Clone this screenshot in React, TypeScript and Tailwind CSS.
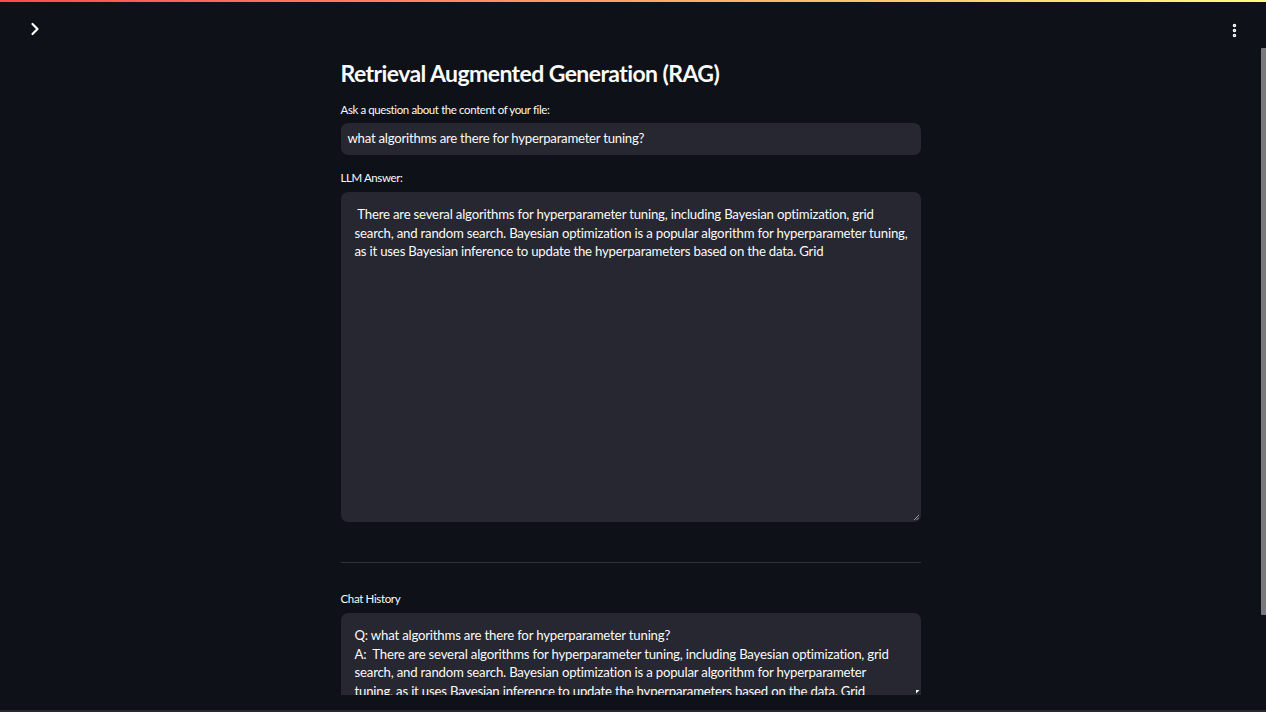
import { ChevronRight, EllipsisVertical } from 'lucide-react';

const answerLines = [
    '\u00a0There are several algorithms for hyperparameter tuning, including Bayesian optimization, grid',
    'search, and random search. Bayesian optimization is a popular algorithm for hyperparameter tuning,',
    'as it uses Bayesian inference to update the hyperparameters based on the data. Grid',
];

const historyLines = [
    'Q: what algorithms are there for hyperparameter tuning?',
    'A:\u00a0\u00a0There are several algorithms for hyperparameter tuning, including Bayesian optimization, grid',
    'search, and random search. Bayesian optimization is a popular algorithm for hyperparameter',
    'tuning, as it uses Bayesian inference to update the hyperparameters based on the data. Grid',
];

function ResizeGrip() {
    return (
        <svg width="6" height="6" viewBox="0 0 6 6" className="absolute right-[2px] bottom-[2px]">
            <path d="M1 6 L6 1 M3.5 6 L6 3.5" stroke="#9a9aa0" strokeWidth="1" />
        </svg>
    );
}

export default function App() {
    return (
        <div className="h-[712px] w-full overflow-hidden bg-[#0e1117] flex flex-col text-[#fafafa] font-['Lato',sans-serif]">
            {/* decoration bar */}
            <div className="h-[2px] w-full shrink-0 bg-[linear-gradient(90deg,#ff4b4b,#fffd80)]" />

            <div className="flex flex-1 min-h-0">
                <div className="flex-1 flex flex-col min-w-0">
                    {/* header */}
                    <div className="h-[53px] shrink-0 flex items-start justify-between pt-[17px] pl-[25px] pr-[18px]">
                        <ChevronRight size={20} strokeWidth={2.6} className="text-white" />
                        <EllipsisVertical size={17} strokeWidth={3} className="text-white mt-[3px]" />
                    </div>

                    {/* main column */}
                    <div className="w-[580px] mx-auto flex flex-col">
                        <h1 className="h-[36px] leading-[36px] text-[23px] font-bold tracking-[-0.58px]">
                            Retrieval Augmented Generation (RAG)
                        </h1>

                        <label className="mt-[9px] h-[20px] leading-[20px] text-[11.5px] tracking-[-0.4px]">
                            Ask a question about the content of your file:
                        </label>
                        <div className="mt-[3px] h-[32px] rounded-[7px] bg-[#262730] px-[7px] flex items-center text-[13.2px] tracking-[-0.25px]">
                            what algorithms are there for hyperparameter tuning?
                        </div>

                        <label className="mt-[13px] h-[20px] leading-[20px] text-[11.5px] tracking-[-0.4px]">LLM Answer:</label>
                        <div className="relative mt-[4px] h-[330px] rounded-[7px] bg-[#262730] px-[14px] pt-[13px] text-[13.2px] leading-[18.5px] tracking-[-0.2px]">
                            {answerLines.map((line, i) => (
                                <div key={i} className="whitespace-nowrap">{line}</div>
                            ))}
                            <ResizeGrip />
                        </div>

                        <div className="mt-[40px] h-px bg-[#31333b]" />

                        <label className="mt-[26px] h-[20px] leading-[20px] text-[11.5px] tracking-[-0.35px]">Chat History</label>
                        <div className="relative mt-[4px] h-[82px] rounded-t-[7px] bg-[#262730] overflow-hidden px-[14px] pt-[13px] text-[13.2px] leading-[18.5px] tracking-[-0.2px]">
                            {historyLines.map((line, i) => (
                                <div key={i} className="whitespace-nowrap">{line}</div>
                            ))}
                        </div>
                        <div className="relative h-0">
                            <div className="absolute right-[1px] -top-[5px] w-[4px] h-[4px] bg-white [clip-path:polygon(0_0,100%_0,0_100%)]" />
                        </div>
                    </div>
                </div>

                {/* scrollbar */}
                <div className="w-[5px] shrink-0">
                    <div className="mt-[46px] h-[567px] bg-[#7a7a7c] rounded-l-[1px]" />
                </div>
            </div>

            <div className="h-[2px] w-full shrink-0 bg-[#262730]" />
        </div>
    );
}
